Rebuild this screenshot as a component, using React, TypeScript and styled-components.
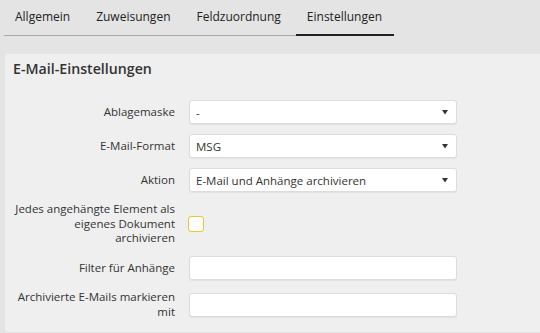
import React from 'react'
import styled, { createGlobalStyle } from 'styled-components';

const GlobalStyle = createGlobalStyle`
    html, body {
        margin: 0;
        padding: 0;
        background: #e4e4e4;
        font-family: "Open Sans", "Liberation Sans", sans-serif;
        color: #333;
    }
`

const tabs = ['Allgemein', 'Zuweisungen', 'Feldzuordnung', 'Einstellungen'];

export default function App() {
    const active = 'Einstellungen';

    return (
        <Main>
            <GlobalStyle/>
            <TabBar>
                {tabs.map((tab) => (
                    <Tab key={tab} active={tab === active}>{tab}</Tab>
                ))}
            </TabBar>
            <Panel>
                <Headline>E-Mail-Einstellungen</Headline>
                <Form>
                    <Label>Ablagemaske</Label>
                    <SelectBox>
                        <SelectText>-</SelectText>
                        <Caret/>
                    </SelectBox>
                    <Label>E-Mail-Format</Label>
                    <SelectBox>
                        <SelectText>MSG</SelectText>
                        <Caret/>
                    </SelectBox>
                    <Label>Aktion</Label>
                    <SelectBox>
                        <SelectText>E-Mail und Anhänge archivieren</SelectText>
                        <Caret/>
                    </SelectBox>
                    <Label>Jedes angehängte Element als eigenes Dokument archivieren</Label>
                    <Checkbox/>
                    <Label>Filter für Anhänge</Label>
                    <TextInput/>
                    <Label>Archivierte E-Mails markieren mit</Label>
                    <TextInput/>
                </Form>
            </Panel>
        </Main>
    )
}

function Caret() {
    return (
        <svg width="6" height="6" viewBox="0 0 6 6">
            <polygon points="0,1 6,1 3,5.5" fill="#333"/>
        </svg>
    )
}

const Main = styled.div`
    width: 540px;
    height: 333px;
    overflow: hidden;
`

const TabBar = styled.div`
    display: inline-flex;
    margin-left: 4px;
    border-bottom: 1px solid #a9a9a9;
    margin-bottom: 18px;
`

const Tab = styled.div<{ active?: boolean }>`
    font-size: 12px;
    line-height: 18px;
    padding: 8px 12px 8px 11px;
    margin-bottom: -1px;
    border-bottom: 2px solid ${(p) => (p.active ? '#222' : 'transparent')};
    color: #222;
    & + & {
        margin-left: 3px;
    }
`

const Panel = styled.div`
    margin-left: 5px;
    background: #efefef;
    border-radius: 3px 0 0 3px;
    padding: 5px 8px 12px 8px;
`

const Headline = styled.div`
    font-size: 14.2px;
    font-weight: 600;
    line-height: 20px;
    color: #333;
    margin-bottom: 21px;
`

const Form = styled.div`
    display: grid;
    grid-template-columns: 162px 268px;
    column-gap: 14px;
    row-gap: 10px;
    align-items: center;
`

const Label = styled.div`
    font-size: 11.5px;
    line-height: 14.7px;
    text-align: right;
    color: #333;
`

const SelectBox = styled.div`
    height: 24px;
    box-sizing: border-box;
    background: #fff;
    border: 1px solid #dcdcdc;
    border-radius: 3px;
    box-shadow: 0 1px 1px rgba(0, 0, 0, 0.06);
    display: flex;
    align-items: center;
    justify-content: space-between;
    padding: 0 8px 0 6px;
`

const SelectText = styled.span`
    font-size: 11.5px;
    color: #333;
`

const TextInput = styled.div`
    height: 24px;
    box-sizing: border-box;
    background: #fff;
    border: 1px solid #dcdcdc;
    border-radius: 3px;
    box-shadow: 0 1px 1px rgba(0, 0, 0, 0.06);
`

const Checkbox = styled.div`
    width: 16px;
    height: 16px;
    box-sizing: border-box;
    background: #fff;
    border: 1px solid #f2c230;
    border-radius: 3px;
    margin-left: -1px;
`
